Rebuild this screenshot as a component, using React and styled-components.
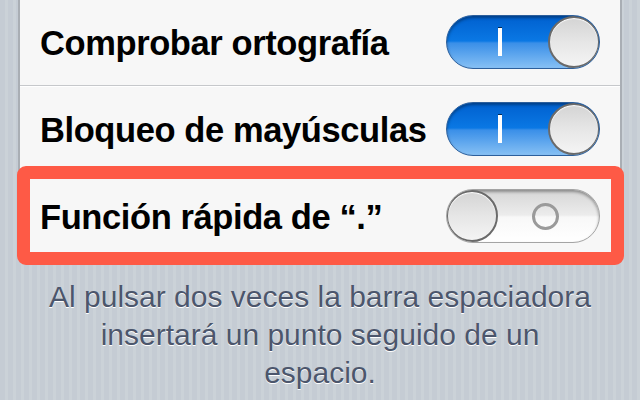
import React from "react";
import styled, { createGlobalStyle } from "styled-components";

const Global = createGlobalStyle`
  html, body { margin: 0; padding: 0; }
  body { font-family: "Liberation Sans", Arial, sans-serif; }
`;

const Page = styled.div`
  width: 640px;
  height: 400px;
  overflow: hidden;
  background: repeating-linear-gradient(
    90deg,
    #c5ccd4 0px,
    #c5ccd4 5px,
    #cbd2d8 5px,
    #cbd2d8 8px
  );
  display: flex;
  flex-direction: column;
`;

const Card = styled.div`
  margin: -1px 18px 0 18px;
  border: 2px solid #a9aeb4;
  border-top: none;
  border-radius: 0 0 10px 10px;
  background: #f7f7f7;
  display: flex;
  flex-direction: column;
`;

const Row = styled.div`
  position: relative;
  height: 86px;
  display: flex;
  align-items: center;
  justify-content: space-between;
  padding: 0 20px 0 20px;
  border-top: ${(p) => (p.$first ? "none" : "1px solid #c6c8cb")};
  box-shadow: ${(p) => (p.$first ? "none" : "inset 0 1px 0 #ffffff")};
`;

const Label = styled.span`
  font-family: "Liberation Sans", Arial, sans-serif;
  font-weight: bold;
  font-size: 34.5px;
  color: #000;
  letter-spacing: -0.4px;
  margin-top: 2px;
`;

const Highlight = styled.div`
  position: absolute;
  left: -3px;
  right: -4px;
  top: -7px;
  bottom: -6px;
  border: 13px solid #fe5a46;
  border-radius: 9px;
  pointer-events: none;
`;

const Switch = styled.div`
  width: 154px;
  height: 54px;
  box-sizing: border-box;
  border-radius: 27px;
  display: flex;
  flex-direction: ${(p) => (p.$on ? "row" : "row-reverse")};
  align-items: center;
  border: 1px solid ${(p) => (p.$on ? "#2c5f9c" : "#a4a4a4")};
  background: ${(p) =>
    p.$on
      ? "linear-gradient(to bottom, #0060cf 0%, #0a78e4 48%, #3a8fe8 52%, #86c0f4 100%)"
      : "linear-gradient(to bottom, #d6d6d6 0%, #ececec 48%, #f8f8f8 52%, #ffffff 100%)"};
  box-shadow: inset 0 2px 3px rgba(0, 0, 0, 0.35);
  overflow: hidden;
`;

const Track = styled.div`
  flex: 1;
  display: flex;
  align-items: center;
  justify-content: center;
  margin-left: ${(p) => (p.$on ? "4px" : "0")};
`;

const OnMark = styled.div`
  width: 4px;
  height: 28px;
  background: #ffffff;
  box-shadow: 0 -1px 0 rgba(0, 0, 0, 0.6);
`;

const OffMark = styled.div`
  width: 21px;
  height: 21px;
  flex: none;
  border-radius: 50%;
  border: 3.5px solid #9a9a9a;
  margin-right: 6px;
`;

const Knob = styled.div`
  width: 52px;
  height: 52px;
  box-sizing: border-box;
  border-radius: 50%;
  flex: none;
  border: 2px solid #6a6a6a;
  background: linear-gradient(to bottom, #d4d4d4 0%, #e6e6e6 50%, #f4f4f4 100%);
  box-shadow: inset 0 1px 1px #ffffff;
  margin: 0 -1px;
`;

const Caption = styled.p`
  margin: 17px 44px 0 44px;
  text-align: center;
  font-family: "Liberation Sans", Arial, sans-serif;
  font-size: 30px;
  line-height: 38px;
  color: #4c566c;
  text-shadow: 0 1px 0 #ffffff;
`;

function Toggle({ on }) {
  return (
    <Switch $on={on}>
      <Track $on={on}>{on ? <OnMark /> : <OffMark />}</Track>
      <Knob />
    </Switch>
  );
}

export default function App() {
  return (
    <>
      <Global />
      <Page>
        <Card>
          <Row $first>
            <Label>Comprobar ortografía</Label>
            <Toggle on />
          </Row>
          <Row>
            <Label>Bloqueo de mayúsculas</Label>
            <Toggle on />
          </Row>
          <Row>
            <Label>Función rápida de “.”</Label>
            <Toggle on={false} />
            <Highlight />
          </Row>
        </Card>
        <Caption>
          Al pulsar dos veces la barra espaciadora insertará un punto seguido de un espacio.
        </Caption>
      </Page>
    </>
  );
}
